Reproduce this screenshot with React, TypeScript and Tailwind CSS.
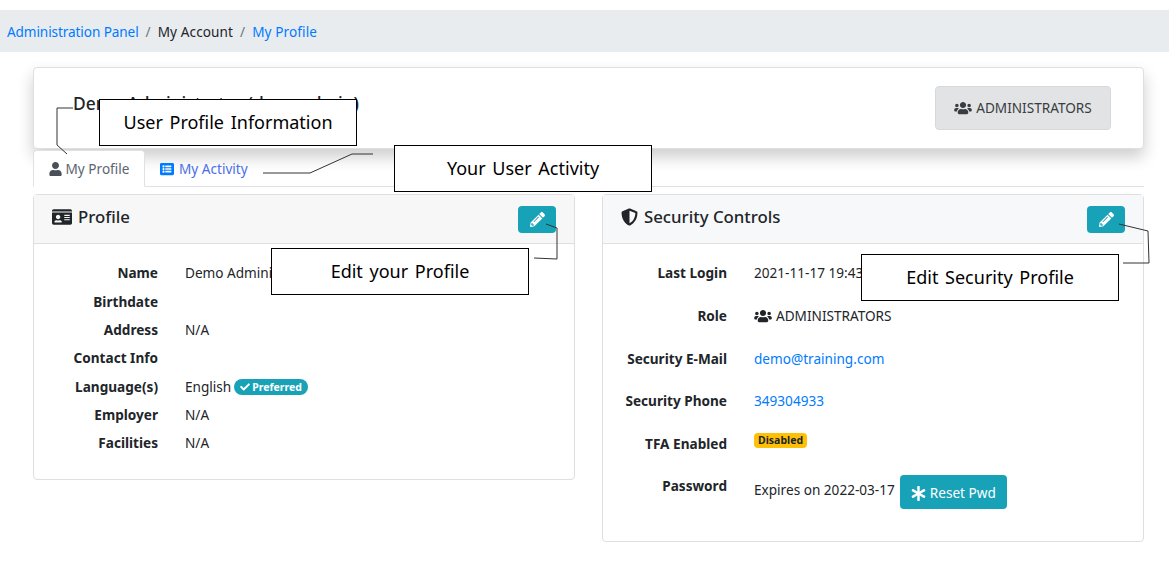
import { FaUser, FaUsers, FaListAlt, FaIdCard, FaShieldAlt, FaPencilAlt, FaCheck, FaAsterisk } from "react-icons/fa";

const font = { fontFamily: '"Noto Sans", sans-serif' };

const Callout = ({ className, children }: { className: string; children: string }) => (
  <div className={`absolute w-[258px] h-[47px] pb-[2px] bg-white border border-black flex items-center justify-center text-[18px] text-black [word-spacing:2px] ${className}`}>
    {children}
  </div>
);

const EditButton = () => (
  <button className="w-[38px] h-[27px] rounded bg-[#17a2b8] text-white flex items-center justify-center">
    <FaPencilAlt className="w-[15px] h-[15px]" />
  </button>
);

const Row = ({ label, height, children }: { label: string; height: string; children?: React.ReactNode }) => (
  <div className={`flex ${height}`}>
    <div className="w-[124px] shrink-0 text-right font-bold text-[#212529] text-[13.6px]">{label}</div>
    <div className="ml-[27px] text-[#212529] text-[13.6px] flex items-start">{children}</div>
  </div>
);

export default function App() {
  return (
    <div style={font} className="relative w-[1169px] h-[582px] overflow-hidden bg-white pt-[10px] text-[13.6px] leading-[20px]">
      <nav className="h-[42px] bg-[#e9ecef] pl-[7px] pt-[2px] flex items-center text-[13.6px]">
        <a className="text-[#007bff] tracking-[-0.1px]">Administration Panel</a>
        <span className="mx-[7px] text-[#6c757d]">/</span>
        <span className="text-[#212529] tracking-[0.1px]">My Account</span>
        <span className="mx-[7px] text-[#6c757d]">/</span>
        <a className="text-[#007bff] tracking-[0.1px]">My Profile</a>
      </nav>

      <div className="mx-[33px] w-[1111px] mt-[15px]">
        <div className="h-[82px] bg-white border border-[#dfdfdf] rounded shadow-[0_8px_16px_rgba(0,0,0,0.2)] flex items-center justify-between pl-[39px] pr-[32px]">
          <h1 className="text-[17.4px] font-medium text-[#212529] mt-[-10px]">Demo Administrator (demoadmin)</h1>
          <div className="w-[176px] h-[44px] mt-[-1px] pt-[1px] rounded bg-[#e2e3e5] border border-[#d6d8db] text-[#383d41] flex items-center justify-center gap-[4px] text-[13.6px]">
            <FaUsers className="w-[18px] h-[14px]" /> ADMINISTRATORS
          </div>
        </div>

        <div className="flex h-[37px] mt-[1px] border-b border-[#dee2e6]">
          <div className="w-[112px] h-[37px] pt-[1px] bg-white border border-[#dee2e6] border-b-white rounded-t flex items-center justify-center gap-[4px] text-[#5b6570]">
            <FaUser className="w-[13px] h-[14px] text-[#495057]" /> My Profile
          </div>
          <div className="flex items-center gap-[5px] pl-[15px] pt-[1px] text-[#4b6fe8]">
            <FaListAlt className="w-[14px] h-[14px] text-[#007bff]" /> My Activity
          </div>
        </div>

        <div className="grid grid-cols-[542px_542px] gap-[27px] mt-[7px] items-start">
          <section className="h-[286px] border border-[#dfdfdf] rounded">
            <header className="h-[49px] bg-[#f7f7f7] border-b border-[#dfdfdf] flex items-start justify-between pl-[18px] pr-[18px] pt-[11px]">
              <h2 className="flex items-center gap-[6px] text-[16.8px] font-medium text-[#212529] leading-[22px]">
                <FaIdCard className="w-[20px] h-[18px]" /> Profile
              </h2>
              <EditButton />
            </header>
            <div className="pt-[19px]">
              <Row label="Name" height="h-[29px]">Demo Administrator</Row>
              <Row label="Birthdate" height="h-[28px]" />
              <Row label="Address" height="h-[28px]">N/A</Row>
              <Row label="Contact Info" height="h-[29px]" />
              <Row label="Language(s)" height="h-[28px]">
                English
                <span className="ml-[3px] mt-[2px] h-[16px] px-[6px] rounded-full bg-[#17a2b8] text-white text-[10.5px] font-bold leading-[16px] flex items-center gap-[2px]">
                  <FaCheck className="w-[10px] h-[10px]" /> Preferred
                </span>
              </Row>
              <Row label="Employer" height="h-[28px]">N/A</Row>
              <Row label="Facilities" height="h-[28px]">N/A</Row>
            </div>
          </section>

          <section className="h-[348px] border border-[#dfdfdf] rounded">
            <header className="h-[49px] bg-[#f7f8fa] border-b border-[#dfdfdf] flex items-start justify-between pl-[18px] pr-[18px] pt-[11px]">
              <h2 className="flex items-center gap-[6px] text-[16.8px] font-medium text-[#212529] leading-[22px]">
                <FaShieldAlt className="w-[17px] h-[18px]" /> Security Controls
              </h2>
              <EditButton />
            </header>
            <div className="pt-[19px]">
              <Row label="Last Login" height="h-[43px]">2021-11-17 19:43</Row>
              <Row label="Role" height="h-[43px]">
                <span className="flex items-center gap-[4px]">
                  <FaUsers className="w-[18px] h-[14px]" /> ADMINISTRATORS
                </span>
              </Row>
              <Row label="Security E-Mail" height="h-[42px]"><a className="text-[#007bff]">demo@training.com</a></Row>
              <Row label="Security Phone" height="h-[43px]"><a className="text-[#007bff]">349304933</a></Row>
              <Row label="TFA Enabled" height="h-[42px]">
                <span className="h-[15px] mt-[-1px] px-[4px] rounded bg-[#ffc107] text-[#212529] text-[10.5px] font-bold leading-[15px]">Disabled</span>
              </Row>
              <Row label="Password" height="h-[40px]">
                <span className="mt-[4px]">Expires on 2022-03-17</span>
                <button className="ml-[5px] mt-[-1px] pt-[2px] w-[107px] h-[34px] rounded bg-[#17a2b8] text-white flex items-center justify-center gap-[4px] text-[13.6px]">
                  <FaAsterisk className="w-[15px] h-[15px]" /> Reset Pwd
                </button>
              </Row>
            </div>
          </section>
        </div>
      </div>

      {/* annotation overlay from the help doc */}
      <svg className="absolute inset-0 pointer-events-none" width="1169" height="582" fill="none" stroke="#333" strokeWidth="1">
        <path d="M73 108H57V145L67 154" />
        <path d="M263 173H310L352 154H373" />
        <path d="M546 224L557 228V259L534 258" />
        <path d="M1119 224L1148 231L1149 263H1123" />
      </svg>
      <Callout className="left-[99px] top-[99px]">User Profile Information</Callout>
      <Callout className="left-[394px] top-[145px]">Your User Activity</Callout>
      <Callout className="left-[271px] top-[248px]">Edit your Profile</Callout>
      <Callout className="left-[861px] top-[254px]">Edit Security Profile</Callout>
    </div>
  );
}
